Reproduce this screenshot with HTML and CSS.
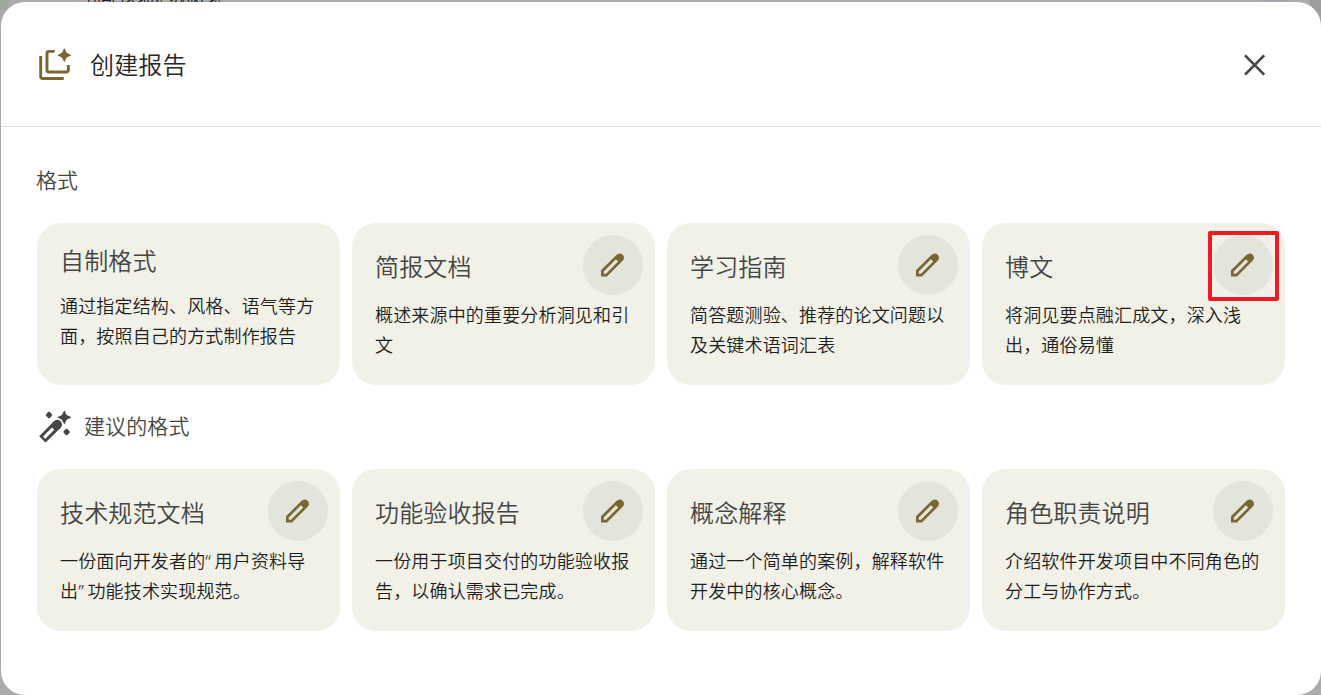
FILE: index.html
```html
<!DOCTYPE html>
<html lang="zh-CN">
<head>
<meta charset="utf-8">
<title>创建报告</title>
<link rel="stylesheet" href="styles.css">
</head>
<body>
<svg class="defs" width="0" height="0" aria-hidden="true">
  <symbol id="pencil" viewBox="0 0 24 24">
    <path fill-rule="evenodd" d="M0 17.3 15.4 2Q18.7-1 21.7 1.8 24.5 5 21.4 8.1L6 23.4H0ZM2.7 18.4V20.7H5L17.2 8.6 14.9 6.3Z"/>
  </symbol>
</svg>
<div class="behind"><i class="blob green"></i><span class="behind-text">所有自身身份。切特好多。</span><i class="blob violet"></i><i class="blob right"></i></div>
<main class="dialog">
  <header class="header">
    <svg class="report-icon" width="34" height="34" viewBox="38 48 34 34">
      <path d="M40.7 56V76.5Q40.7 78.5 42.7 78.5H63.7M54.7 51.4H49Q47 51.4 47 53.4V70Q47 72 49 72H66.3Q68.3 72 68.3 70V65"/>
      <path class="solid" d="M64.3 48.1 66.7 52.8 71.4 55.2 66.7 57.6 64.3 62.3 61.9 57.6 57.2 55.2 61.9 52.8Z"/>
    </svg>
    <h1>创建报告</h1>
    <svg class="close" width="24" height="24" viewBox="0 0 24 24"><path d="M2 2.4 21.2 21.6M21.2 2.4 2 21.6"/></svg>
  </header>
  <section>
    <h2 class="label">格式</h2>
    <div class="grid">
      <article class="card plain"><div class="top"><h3>自制格式</h3></div><p>通过指定结构、风格、语气等方面，按照自己的方式制作报告</p></article>
      <article class="card"><div class="top"><h3>简报文档</h3><button class="edit"><svg><use href="#pencil"/></svg></button></div><p>概述来源中的重要分析洞见和引文</p></article>
      <article class="card"><div class="top"><h3>学习指南</h3><button class="edit"><svg><use href="#pencil"/></svg></button></div><p>简答题测验、推荐的论文问题以及关键术语词汇表</p></article>
      <article class="card"><div class="top"><h3>博文</h3><button class="edit marked"><svg><use href="#pencil"/></svg></button></div><p>将洞见要点融汇成文，深入浅出，通俗易懂</p></article>
    </div>
  </section>
  <section>
    <h2 class="label suggested">
      <svg class="wand" width="34" height="34" viewBox="38 409 34 34">
        <path fill-rule="evenodd" d="M39.2 436.3 53.6 421.6Q57.2 418.3 60.6 421.3 63.6 424.8 60.3 428.2L45.5 442.6ZM43 436.5 45.3 438.8 54.3 429.8 52 427.5Z"/>
        <path d="M64.3 410.2 66.7 414.9 71.4 417.3 66.7 419.7 64.3 424.4 61.9 419.7 57.2 417.3 61.9 414.9ZM49 411.6 50.9 413.1 52.4 415 50.9 416.9 49 418.4 47.1 416.9 45.6 415 47.1 413.1ZM66.6 428.6 68.5 430.1 70 432 68.5 433.9 66.6 435.4 64.7 433.9 63.2 432 64.7 430.1Z"/>
      </svg>
      <span>建议的格式</span>
    </h2>
    <div class="grid">
      <article class="card"><div class="top"><h3>技术规范文档</h3><button class="edit"><svg><use href="#pencil"/></svg></button></div><p>一份面向开发者的<span class="quote">“</span>用户资料导出<span class="quote">”</span>功能技术实现规范。</p></article>
      <article class="card"><div class="top"><h3>功能验收报告</h3><button class="edit"><svg><use href="#pencil"/></svg></button></div><p>一份用于项目交付的功能验收报告，以确认需求已完成。</p></article>
      <article class="card"><div class="top"><h3>概念解释</h3><button class="edit"><svg><use href="#pencil"/></svg></button></div><p>通过一个简单的案例，解释软件开发中的核心概念。</p></article>
      <article class="card"><div class="top"><h3>角色职责说明</h3><button class="edit"><svg><use href="#pencil"/></svg></button></div><p>介绍软件开发项目中不同角色的分工与协作方式。</p></article>
    </div>
  </section>
</main>
</body>
</html>
```
FILE: styles.css
```css
*, *::after { box-sizing: border-box; }
body {
  margin: 0;
  height: 695px;
  padding: 2px 0 0 1px;
  overflow: hidden;
  position: relative;
  background: #acabac;
  font-family: "Noto Sans", "Noto Sans CJK SC", sans-serif;
  font-weight: 350;
  color: #444746;
}
h1, h2, h3, p { margin: 0; font-weight: 350; }
.defs { position: absolute; }
.behind { position: absolute; inset: 0; }
.behind-text { position: absolute; left: 87px; top: -14px; font-size: 15px; line-height: 20px; letter-spacing: -3.4px; font-weight: 400; color: #222; white-space: nowrap; }
.blob { position: absolute; top: 0; height: 10px; }
.green { left: 0; width: 8px; background: #9aa99b; }
.violet { left: 1262px; width: 24px; background: #a5a3ab; }
.right { left: 1310px; width: 11px; height: 24px; background: #a09d9f; }
.dialog {
  position: relative;
  height: 693px;
  background: #fff;
  border-radius: 24px;
}
.header {
  display: flex;
  align-items: center;
  height: 125px;
  padding: 2px 54px 0 37px;
  border-bottom: 1px solid #dde1eb;
}
.report-icon { fill: none; stroke: #7a6630; stroke-width: 2.9; }
.report-icon .solid { fill: #7a6630; stroke: none; }
h1 { flex: 1; margin-left: 18px; font-size: 24px; line-height: 36px; letter-spacing: .15px; color: #252626; }
.close { fill: none; stroke: #444746; stroke-width: 2.7; }
section { padding: 0 36px; }
.label {
  display: flex;
  align-items: center;
  height: 84px;
  padding-bottom: 2px;
  font-size: 21px;
  line-height: 30px;
  letter-spacing: .1px;
}
section:first-of-type .label { height: 96px; padding-top: 12px; }
section:first-of-type .label { text-indent: -1px; }
.suggested { gap: 12px; }
.wand { margin-left: 1px; fill: #444746; }
.grid { display: grid; grid-template-columns: repeat(4, 303px); gap: 12px; }
.card {
  height: 162px;
  padding: 12px 12px 0 23px;
  border-radius: 24px;
  background: #f1f1e8;
}
.top { display: flex; align-items: center; justify-content: space-between; height: 60px; }
h3 { padding-top: 3px; font-size: 24px; line-height: 36px; letter-spacing: .15px; }
.plain h3 { padding-top: 0; }
.card p { margin: 5px 11px 0 0; font-size: 18px; line-height: 30px; letter-spacing: .17px; color: #1f1f1f; }
.card p .quote { letter-spacing: 3.6px; }
.plain .top { height: 51px; }
.edit {
  position: relative;
  display: grid;
  place-items: center;
  width: 60px;
  height: 60px;
  padding: 0;
  border: 0;
  border-radius: 50%;
  background: #e3e4dc;
}
.edit svg { width: 24px; height: 24px; fill: #7a6630; }
.marked::after {
  content: "";
  position: absolute;
  left: -5px;
  top: -4px;
  width: 71px;
  height: 70px;
  border: 4px solid #ed1c24;
  border-radius: 2px;
}
```
